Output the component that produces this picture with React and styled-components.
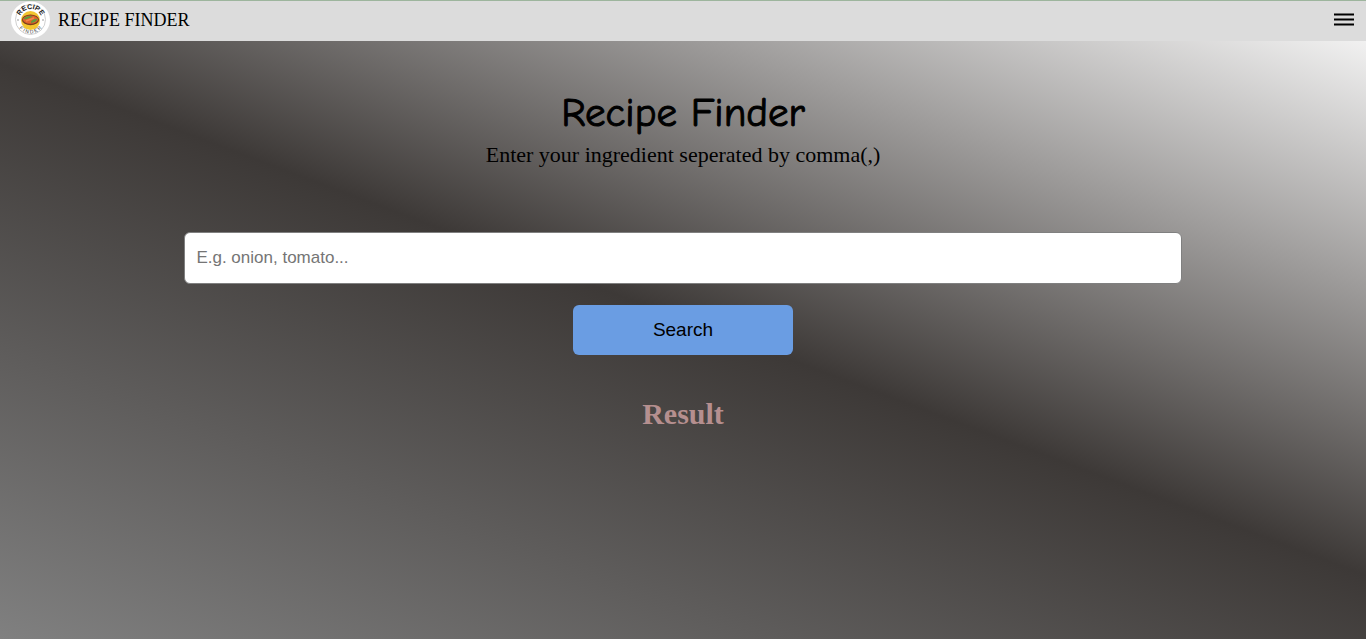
import React from 'react';
import styled, { createGlobalStyle } from 'styled-components';

const GlobalStyle = createGlobalStyle`
  * { box-sizing: border-box; }
  body {
    margin: 0;
    min-height: 100vh;
    font-family: "Liberation Serif", "Times New Roman", serif;
    color: #000;
  }
`;

const Page = styled.div`
  min-height: 100vh;
  background: linear-gradient(3.5rad, #fff, #3d3937, #808080);
`;

const Header = styled.header`
  display: flex;
  align-items: center;
  justify-content: space-between;
  height: 41px;
  padding: 0 12px 2px 11px;
  border-top: 1px solid #9db59d;
  background: #dcdcdc;
`;

const Brand = styled.a`
  display: flex;
  align-items: center;
  gap: 8px;
  color: inherit;
  font-size: 18px;
  line-height: 20px;
  text-decoration: none;
`;

const MenuButton = styled.button`
  display: flex;
  padding: 0;
  border: 0;
  background: none;
  cursor: pointer;
`;

const Main = styled.main`
  display: flex;
  flex-direction: column;
  align-items: center;
  padding: 44px 0;
`;

const Title = styled.h1`
  margin: 0;
  font-family: "Comic Sans MS", "Comic Neue", cursive;
  font-size: 41px;
  font-weight: 400;
  line-height: 56px;
  -webkit-text-stroke: 1px #000;
`;

const Hint = styled.label`
  font-size: 22px;
  line-height: 28px;
`;

const SearchForm = styled.form`
  display: flex;
  flex-direction: column;
  align-items: center;
  gap: 21px;
  width: 73%;
  margin-top: 63px;
`;

const Field = styled.input`
  width: 100%;
  height: 52px;
  padding: 0 11px;
  border: 1px solid #808080;
  border-radius: 6px;
  background: #fff;
  font-family: "Liberation Sans", Arial, sans-serif;
  font-size: 17px;
  &::placeholder { color: #757575; }
`;

const SearchButton = styled.button`
  width: 220px;
  height: 50px;
  border: 0;
  border-radius: 6px;
  background: #6a9de3;
  color: #000;
  font-family: "Liberation Sans", Arial, sans-serif;
  font-size: 19px;
  cursor: pointer;
`;

const ResultHeading = styled.h2`
  margin: 42px 0 0;
  color: #b58f8f;
  font-size: 30px;
  line-height: 34px;
`;

function Logo() {
  return (
    <svg width="39" height="38" viewBox="0 0 39 38" aria-hidden="true">
      <defs>
        <path id="upper" d="M8.5 18.5 A11 10.5 0 0 1 30.5 18.5" />
        <path id="lower" d="M5.5 18 A14 14.5 0 0 0 33.5 18" />
      </defs>
      <ellipse cx="19.5" cy="19" rx="19.5" ry="18.5" fill="#fff" />
      <circle cx="19.5" cy="18.5" r="15" fill="none" stroke="#d0d0d0" strokeWidth="1" />
      <circle cx="19.5" cy="19.5" r="9.5" fill="#f3c52f" />
      <ellipse cx="19.5" cy="18.8" rx="8.6" ry="5.4" fill="#7b3f1d" />
      <ellipse cx="19.5" cy="18.6" rx="7.6" ry="4.2" fill="#e2632c" />
      <path d="M12.5 17.5 Q17 14 22 15.5 Q18 17.5 14 18.5Z" fill="#5f9a3c" />
      <path d="M20 20.5 Q23 17 26.5 18 Q25 21.5 20 22Z" fill="#5f9a3c" />
      <path d="M15 20 L23 17" stroke="#f28a4b" strokeWidth="1.4" />
      <circle cx="7" cy="19" r="0.7" fill="#777" />
      <circle cx="32" cy="19" r="0.7" fill="#777" />
      <text fontFamily="Liberation Sans, sans-serif" fontSize="7" fontWeight="700" fill="#222" textAnchor="middle">
        <textPath href="#upper" startOffset="50%">RECIPE</textPath>
      </text>
      <text fontFamily="Liberation Sans, sans-serif" fontSize="5" fill="#444" textAnchor="middle">
        <textPath href="#lower" startOffset="50%">F I N D E R</textPath>
      </text>
    </svg>
  );
}

export default function App() {
  return (
    <Page>
      <GlobalStyle />
      <Header>
        <Brand href="#">
          <Logo />
          RECIPE FINDER
        </Brand>
        <MenuButton type="button" aria-label="Menu">
          <svg width="20" height="14" viewBox="0 0 20 14" stroke="#000" strokeWidth="2">
            <path d="M0 1.5H20M0 6.5H20M0 11.5H20" />
          </svg>
        </MenuButton>
      </Header>
      <Main>
        <Title>Recipe Finder</Title>
        <Hint htmlFor="ingredients">Enter your ingredient seperated by comma(,)</Hint>
        <SearchForm onSubmit={(e) => e.preventDefault()}>
          <Field id="ingredients" type="text" placeholder="E.g. onion, tomato..." />
          <SearchButton type="submit">Search</SearchButton>
        </SearchForm>
        <ResultHeading>Result</ResultHeading>
      </Main>
    </Page>
  );
}
